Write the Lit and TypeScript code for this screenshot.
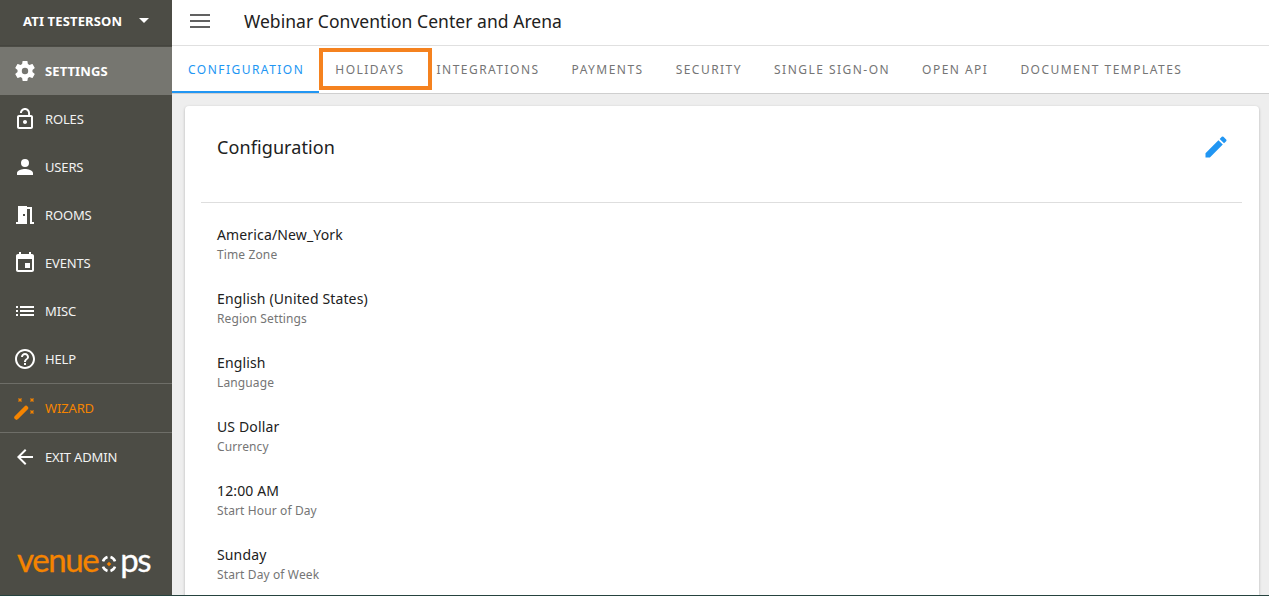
import { LitElement, html, css } from "lit";
import { customElement } from "lit/decorators.js";

const nav = [
  { label: "ROLES", d: "M12 17c1.100 0 2-.9 2-2s-.9-2-2-2-2 .9-2 2 .9 2 2 2zm6-9h-1V6c0-2.760-2.240-5-5-5S7 3.240 7 6h1.900c0-1.710 1.390-3.100 3.100-3.100 1.710 0 3.100 1.390 3.100 3.100v2H6c-1.100 0-2 .9-2 2v10c0 1.100.9 2 2 2h12c1.100 0 2-.9 2-2V10c0-1.100-.9-2-2-2zm0 12H6V10h12v10z" },
  { label: "USERS", d: "M12 12a4 4 0 1 0 0-8 4 4 0 0 0 0 8zm0 2c-2.670 0-8 1.340-8 4v2h16v-2c0-2.660-5.330-4-8-4z" },
  { label: "ROOMS", d: "M14 6v15H3v-2h2V3h9v1h5v15h2v2h-4V6h-3zm-4 5v2h2v-2h-2z" },
  { label: "EVENTS", d: "M17 12h-5v5h5v-5zM16 1v2H8V1H6v2H5c-1.110 0-1.990.9-1.990 2L3 19c0 1.100.89 2 2 2h14c1.100 0 2-.9 2-2V5c0-1.100-.9-2-2-2h-1V1h-2zm3 18H5V8h14v11z" },
  { label: "MISC", d: "M3 13h2v-2H3v2zm0 4h2v-2H3v2zm0-8h2V7H3v2zm4 4h14v-2H7v2zm0 4h14v-2H7v2zM7 7v2h14V7H7z" },
  { label: "HELP", d: "M11 18h2v-2h-2v2zm1-16C6.480 2 2 6.480 2 12s4.480 10 10 10 10-4.480 10-10S17.520 2 12 2zm0 18c-4.410 0-8-3.590-8-8s3.590-8 8-8 8 3.590 8 8-3.590 8-8 8zm0-14c-2.210 0-4 1.790-4 4h2c0-1.100.9-2 2-2s2 .9 2 2c0 2-3 1.750-3 5h2c0-2.250 3-2.500 3-5 0-2.210-1.790-4-4-4z" },
];
const gear = "M19.430 12.980c.04-.32.07-.64.07-.98s-.03-.66-.07-.98l2.110-1.650c.19-.15.24-.42.12-.64l-2-3.460c-.12-.22-.39-.3-.61-.22l-2.490 1c-.52-.4-1.080-.73-1.690-.98l-.38-2.650C14.460 2.180 14.250 2 14 2h-4c-.25 0-.46.18-.49.42l-.38 2.650c-.61.25-1.170.59-1.690.98l-2.490-1c-.23-.09-.49 0-.61.22l-2 3.460c-.13.22-.07.49.12.64l2.110 1.650c-.04.32-.07.65-.07.98s.03.66.07.98l-2.110 1.650c-.19.15-.24.42-.12.64l2 3.460c.12.22.39.3.61.22l2.490-1c.52.4 1.080.73 1.690.98l.38 2.650c.03.24.24.42.49.42h4c.25 0 .46-.18.49-.42l.38-2.650c.61-.25 1.170-.59 1.690-.98l2.490 1c.23.09.49 0 .61-.22l2-3.460c.12-.22.07-.49-.12-.64l-2.110-1.650zM12 15.200a3.200 3.200 0 1 1 0-6.400 3.200 3.200 0 0 1 0 6.400z";
const tabs = ["CONFIGURATION", "HOLIDAYS", "INTEGRATIONS", "PAYMENTS", "SECURITY", "SINGLE SIGN-ON", "OPEN API", "DOCUMENT TEMPLATES"];
const fields = [
  ["America/New_York", "Time Zone"],
  ["English (United States)", "Region Settings"],
  ["English", "Language"],
  ["US Dollar", "Currency"],
  ["12:00 AM", "Start Hour of Day"],
  ["Sunday", "Start Day of Week"],
];
const icon = (d: string) => html`<svg class="ic" viewBox="0 0 24 24"><path d=${d}></path></svg>`;

@customElement("app-root")
export class AppRoot extends LitElement {
  static styles = css`
    :host { display: block; width: 1269px; height: 596px; overflow: hidden; font-family: "Noto Sans", "Open Sans", sans-serif; position: relative; }
    * { box-sizing: border-box; }
    .app { display: flex; height: 596px; background: #eeeeee; border-bottom: 1px solid #26433f; }
    .side { width: 172px; flex: none; background: #4c4c45; color: #f2f2f2; display: flex; flex-direction: column; }
    .user { height: 46px; display: flex; align-items: center; padding: 0 0 4px 23px; font-size: 13px; font-weight: 700; color: #fff; letter-spacing: 0.15px; border-bottom: 1px solid #45453f; }
    .caret { width: 0; height: 0; border: 5px solid transparent; border-top-color: #fff; border-bottom: 0; margin-left: 17px; }
    .item { height: 48px; display: flex; align-items: center; padding-left: 13px; font-size: 13px; letter-spacing: -0.15px; gap: 8px; }
    .item.active { background: #767670; font-weight: 700; color: #fff; margin-top: 1px; letter-spacing: 0.1px; }
    .ic { width: 24px; height: 24px; fill: #fff; flex: none; }
    .rule { height: 1px; background: #6e6e68; }
    .wizard { color: #f58400; }
    .wand { fill: #f58400; stroke: #f58400; }
    .logo { margin-top: auto; height: 38px; padding: 0 0 0 17px; margin-bottom: 14px; display: flex; align-items: flex-start; font-family: "Lato", sans-serif; font-size: 33px; line-height: 33px; letter-spacing: -1.400px; color: #f58400; -webkit-text-stroke: 0.3px currentColor; }
    .logo .w { color: #fff; }
    .logo svg { width: 18px; height: 18px; margin: 11.500px 2px 0 2px; flex: none; }
    .main { flex: 1; min-width: 0; display: flex; flex-direction: column; }
    .top { height: 46px; background: #fff; border-bottom: 1px solid #e0e0e0; display: flex; align-items: center; padding-bottom: 3px; flex: none; }
    .menu { width: 20px; height: 14px; margin-left: 18px; display: flex; flex-direction: column; justify-content: space-between; }
    .menu i { height: 2px; background: #616161; display: block; }
    .title { margin-left: 34px; font-size: 17.500px; color: #212121; letter-spacing: 0.04px; }
    .tabs { height: 48px; background: #fff; border-bottom: 1px solid #cfcfcf; display: flex; flex: none; }
    .tab { padding: 2px 16px 0; display: flex; align-items: center; font-size: 12px; letter-spacing: 1.470px; color: #757575; height: 47px; white-space: nowrap; border-bottom: 2px solid transparent; }
    .tab.active { color: #2196f3; border-bottom-color: #2196f3; padding-right: 15px; }
    .body { flex: 1; padding: 12px 10px 0 13px; min-height: 0; overflow: hidden; }
    .card { background: #fff; border-radius: 4px; box-shadow: 0 1px 3px rgba(0,0,0,.25); height: 600px; padding: 0 17px 0 16px; }
    .head { height: 97px; border-bottom: 1px solid #dedede; display: flex; justify-content: space-between; padding: 26px 12px 0 16px; }
    .head h2 { margin: 0; font-size: 18px; font-weight: 400; color: #212121; line-height: 30px; letter-spacing: 0.1px; }
    .pen { width: 28px; height: 28px; fill: #2196f3; margin-top: 1px; }
    .fields { padding: 21px 16px 0; }
    .f { height: 64px; }
    .v { font-size: 14px; line-height: 22px; color: #212121; letter-spacing: 0.14px; }
    .l { font-size: 12px; line-height: 18px; color: #757575; letter-spacing: 0.12px; }
    .mark { position: absolute; left: 319px; top: 48px; width: 113px; height: 42px; border: 4px solid #f5821f; pointer-events: none; }
  `;
  render() {
    return html`<div class="app">
      <aside class="side">
        <div class="user">ATI TESTERSON<span class="caret"></span></div>
        <div class="item active">${icon(gear)}SETTINGS</div>
        ${nav.map((n) => html`<div class="item">${icon(n.d)}${n.label}</div>`)}
        <div class="rule"></div>
        <div class="item wizard">
          <svg class="ic wand" viewBox="0 0 24 24">
            <path d="M3.500 21.500 13 12" fill="none" stroke-width="4.500" stroke-linecap="round"></path>
            <path d="M5.500 2.500l3 3m0-3l-3 3M17.500 2.500l3 3m0-3l-3 3M17.500 14.500l3 3m0-3l-3 3" fill="none" stroke-width="1.300"></path>
          </svg>WIZARD
        </div>
        <div class="rule"></div>
        <div class="item">${icon("M20 11H7.830l5.590-5.590L12 4l-8 8 8 8 1.410-1.410L7.830 13H20v-2z")}EXIT ADMIN</div>
        <div class="logo">venue<svg viewBox="0 0 24 24" fill="none" stroke-width="3.500">
            <path d="M4 8.500A9.500 9.500 0 0 1 10 2.800" stroke="#fff"></path>
            <path d="M14 2.800A9.500 9.500 0 0 1 20 8.500" stroke="#fff"></path>
            <path d="M20 15.500A9.500 9.500 0 0 1 14 21.200" stroke="#fff"></path>
            <path d="M10 21.200A9.500 9.500 0 0 1 4 15.500" stroke="#fff"></path>
            <path d="M9 12l3-3 3 3-3 3z" fill="#f58400" stroke="none"></path>
          </svg><span class="w">ps</span></div>
      </aside>
      <main class="main">
        <div class="top">
          <div class="menu"><i></i><i></i><i></i></div>
          <div class="title">Webinar Convention Center and Arena</div>
        </div>
        <nav class="tabs">
          ${tabs.map((t, i) => html`<div class="tab ${i === 0 ? "active" : ""}">${t}</div>`)}
        </nav>
        <div class="body">
          <section class="card">
            <div class="head"><h2>Configuration</h2>
              <svg class="pen" viewBox="0 0 24 24"><path d="M3 17.250V21h3.750L17.810 9.940l-3.750-3.750L3 17.250zM20.710 7.040a1 1 0 0 0 0-1.410l-2.340-2.340a1 1 0 0 0-1.410 0l-1.830 1.830 3.750 3.750 1.830-1.830z"></path></svg>
            </div>
            <div class="fields">
              ${fields.map(([v, l]) => html`<div class="f"><div class="v">${v}</div><div class="l">${l}</div></div>`)}
            </div>
          </section>
        </div>
      </main>
      <div class="mark"></div>
    </div>`;
  }
}
